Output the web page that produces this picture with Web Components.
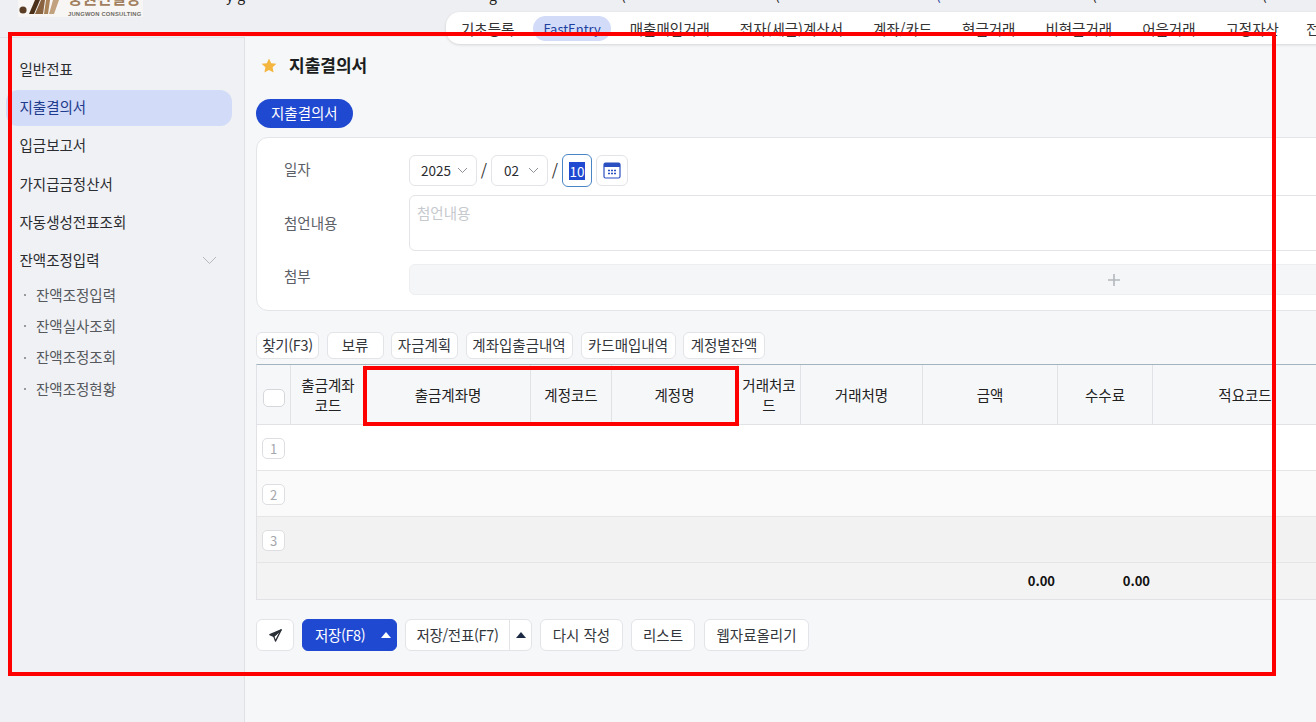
<!DOCTYPE html>
<html lang="ko">
<head>
<meta charset="utf-8">
<title>지출결의서</title>
<style>
    html, body { margin: 0; height: 100%; }
    body {
        width: 1316px;
        height: 722px;
        overflow: hidden;
        position: relative;
        display: flex;
        flex-direction: column;
        background: #f6f7f9;
        color: #222;
        font: 14.5px/1.4 "Noto Sans CJK KR", "Noto Sans", sans-serif;
    }
    .body-row { display: flex; flex: 1; min-height: 0; }
</style>
</head>
<body>
<top-header></top-header>
<div class="body-row">
    <side-nav></side-nav>
    <voucher-page></voucher-page>
</div>
<red-mark style="left:8px;top:32px;width:1260px;height:636px"></red-mark>
<red-mark style="left:363px;top:366px;width:368px;height:52px"></red-mark>

<script>
class TopHeader extends HTMLElement {
    constructor() {
        super();
        this.attachShadow({ mode: 'open' });
    }

    connectedCallback() {
        const tabs = ['기초등록', 'FastEntry', '매출매입거래', '전자(세금)계산서', '계좌/카드', '현금거래', '비현금거래', '어음거래', '고정자산', '전표'];
        this.shadowRoot.innerHTML = `
        <style>
            :host { display: block; height: 37px; flex: none; position: relative; background: #eeeff2; }
            .logo { position: absolute; left: 18px; top: 0; width: 125px; height: 17px; background: #f7f6f4; overflow: hidden; }
            .logo svg { position: absolute; left: 0; top: 0; }
            .logo .ko { position: absolute; left: 50px; top: -12px; font-size: 15.7px; line-height: 20px; font-weight: 700; color: #a2805f; white-space: nowrap; }
            .logo .en { position: absolute; left: 50px; top: 10px; font: 700 5.8px/8px "Liberation Sans", sans-serif; color: #6d6a66; white-space: nowrap; letter-spacing: .2px; }
            .cut { position: absolute; top: -13px; font-size: 14px; line-height: 17px; color: #222; white-space: nowrap; }
            .tabs {
                position: absolute; left: 446px; top: 12px; width: 1000px; height: 32px; box-sizing: border-box;
                display: flex; align-items: center; gap: 10px; padding-left: 5px;
                background: #fff; border-radius: 14px 0 0 14px; box-shadow: 0 1px 3px rgba(0,0,0,.14); z-index: 2;
            }
            .tab { padding: 0 10px; line-height: 25px; height: 25px; white-space: nowrap; color: #333; border-radius: 13px; }
            .tab.on { background: #d2dbf8; color: #1d3f9e; margin: 0 -1px 0 -1px; font-size: 13px; }
            .tab:last-child { margin-left: -3px; }
        </style>
        <div class="logo">
            <svg width="48" height="17" viewBox="0 0 48 17">
                <circle cx="5" cy="10" r="3.6" fill="#5a3d24"/>
                <path d="M11 14 L17 0 L22 0 L16 14 Z" fill="#4a3019"/>
                <path d="M17 14 L23 0 L27 0 L25 14 Z" fill="#8a6340"/>
                <path d="M26 14 L28 0 L32 0 L30 14 Z" fill="#a98258"/>
                <path d="M31 14 L35 0 L41 0 L36 14 Z" fill="#c2a27e"/>
            </svg>
            <span class="ko">중원컨설팅</span>
            <span class="en">JUNGWON CONSULTING</span>
        </div>
        <span class="cut" style="left:226px">y g</span>
        <span class="cut" style="left:489px">g</span>
        <span class="cut" style="left:621px">(</span>
        <span class="cut" style="left:775px">(</span>
        <span class="cut" style="left:936px;color:#1d3f9e">(</span>
        <span class="cut" style="left:1092px">(</span>
        <span class="cut" style="left:1262px">(</span>
        <nav class="tabs">
            ${tabs.map((t, i) => `<span class="tab ${i == 1 ? 'on' : ''}">${t}</span>`).join('')}
        </nav>
        `;
    }
}

class SideNav extends HTMLElement {
    constructor() {
        super();
        this.attachShadow({ mode: 'open' });
    }

    connectedCallback() {
        const main = ['일반전표', '지출결의서', '입금보고서', '가지급금정산서', '자동생성전표조회'];
        const sub = ['잔액조정입력', '잔액실사조회', '잔액조정조회', '잔액조정현황'];
        this.shadowRoot.innerHTML = `
        <style>
            :host { display: block; width: 245px; flex: none; box-sizing: border-box; background: #f0f1f4; border-right: 1px solid #dfe1e5; border-top: 1px solid #e2e3e7; padding-top: 14px; }
            ul { list-style: none; margin: 0; padding: 0; }
            .item { height: 36px; box-sizing: border-box; padding: 0 0 2px 13.5px; margin: 0 12px 2.25px 6px; display: flex; align-items: center; justify-content: space-between; border-radius: 12px; color: #2a2c30; white-space: nowrap; }
            .item.on { background: #d2dbf8; color: #1d3a8c; }
            .item svg { margin-right: 15px; }
            .subs { margin-top: -1.5px; }
            .sub { height: 31.4px; padding: 0 0 2px 36px; box-sizing: border-box; position: relative; display: flex; align-items: center; color: #55585d; }
            .sub::before { content: ""; position: absolute; left: 24px; top: 14px; width: 2px; height: 2px; background: #999; }
        </style>
        <ul>
            ${main.map((t, i) => `<li class="item ${i == 1 ? 'on' : ''}">${t}</li>`).join('')}
            <li class="item">잔액조정입력
                <svg width="15" height="9" viewBox="0 0 15 9" fill="none" stroke="#b5b8bd"><path d="M1 1 L7.5 7.5 L14 1"/></svg>
            </li>
        </ul>
        <ul class="subs">
            ${sub.map(t => `<li class="sub">${t}</li>`).join('')}
        </ul>
        `;
    }
}

class ToolBtn extends HTMLElement {
    constructor() {
        super();
        this.attachShadow({ mode: 'open' });
    }

    connectedCallback() {
        this.shadowRoot.innerHTML = `
        <style>
            :host { display: inline-flex; align-items: center; justify-content: center; box-sizing: border-box; height: var(--btn-h, 27px); background: #fff; border: 1px solid #e2e4e8; border-radius: 6px; white-space: nowrap; color: #33363b; }
        </style>
        <slot></slot>
        `;
    }
}

class DataTable extends HTMLElement {
    constructor() {
        super();
        this.attachShadow({ mode: 'open' });
    }

    connectedCallback() {
        const cols = [
            ['출금계좌<br>코드', 75], ['출금계좌명', 165], ['계정코드', 81], ['계정명', 126], ['거래처코드', 63],
            ['거래처명', 122], ['금액', 135], ['수수료', 95], ['적요코드', 185]
        ];
        const tpl = '34px ' + cols.map(c => c[1] + 'px').join(' ') + ' 1fr';
        this.shadowRoot.innerHTML = `
        <style>
            :host { display: block; width: 1590px; box-sizing: border-box; border: 1px solid #e0e2e5; border-top: 1px solid #a3b4bf; }
            .head { display: grid; grid-template-columns: ${tpl}; height: 59px; border-bottom: 1px solid #e0e2e5; }
            .th { display: flex; align-items: center; justify-content: center; text-align: center; border-right: 1px solid #e0e2e5; padding: 0 3px; line-height: 20px; color: #222; }
            .th:last-child { border-right: 0; }
            .check { width: 22px; height: 18px; margin-top: 6px; border: 1px solid #d5d7db; border-radius: 5px; background: #fff; box-sizing: border-box; }
            .row { height: 46px; box-sizing: border-box; border-bottom: 1px solid #e4e5e7; padding: 1px 0 0 5px; display: flex; align-items: center; background: #fff; }
            .row.r2 { background: #fafafa; }
            .row.r3 { background: #f2f2f2; }
            .num { width: 23px; height: 21px; box-sizing: border-box; border: 1px solid #dcdee1; border-radius: 5px; background: #fff; color: #a5a8ac; font-size: 13px; line-height: 19px; text-align: center; }
            .foot { display: grid; grid-template-columns: ${tpl}; height: 36px; background: #f3f3f3; align-items: center; font-weight: 700; font-size: 13px; color: #111; }
            .foot span { text-align: right; padding-right: 3px; }
        </style>
        <div class="head">
            <div class="th"><div class="check"></div></div>
            ${cols.map(c => `<div class="th"><span>${c[0]}</span></div>`).join('')}
            <div class="th"></div>
        </div>
        <div class="row"><div class="num">1</div></div>
        <div class="row r2"><div class="num">2</div></div>
        <div class="row r3"><div class="num">3</div></div>
        <div class="foot">
            <i></i><i></i><i></i><i></i><i></i><i></i><i></i>
            <span>0.00</span><span>0.00</span>
        </div>
        `;
    }
}

class VoucherPage extends HTMLElement {
    constructor() {
        super();
        this.attachShadow({ mode: 'open' });
    }

    connectedCallback() {
        const chevron = `<svg width="11" height="7" viewBox="0 0 11 7" fill="none" stroke="#8d9298"><path d="M1 1 L5.5 5.5 L10 1"/></svg>`;
        const caret = (c) => `<svg width="10" height="6" viewBox="0 0 10 6"><path d="M5 0 L10 6 L0 6 Z" fill="${c}"/></svg>`;
        this.shadowRoot.innerHTML = `
        <style>
            :host { display: block; flex: 1; min-width: 0; box-sizing: border-box; padding: 18px 0 0 11px; overflow: hidden; }
            .title { display: flex; align-items: center; gap: 12px; height: 20px; padding-bottom: 2px; margin-left: 5px; font-size: 17px; font-weight: 700; color: #1b1d20; }
            .pill { display: inline-block; margin-top: 22px; height: 29px; line-height: 28px; padding: 0 15px; background: #1f49d1; color: #fff; border-radius: 15px; }
            .card { width: 1590px; height: 174px; box-sizing: border-box; margin-top: 9px; padding: 16px 27px 0 27px; background: #fff; border: 1px solid #e3e5e8; border-radius: 12px; }
            .field { display: flex; }
            .field label { width: 125px; flex: none; color: #5c6066; align-self: center; position: relative; top: -1px; }
            .date { height: 33px; align-items: center; }
            .sel { height: 31px; box-sizing: border-box; background: #fff; border: 1px solid #e2e4e8; border-radius: 6px; display: flex; align-items: center; justify-content: space-between; padding: 0 8px 0 11px; color: #2a2c30; font-size: 13.5px; }
            .slash { width: 14px; text-align: center; color: #333; font-size: 16px; }
            .day { width: 30px; height: 33px; box-sizing: border-box; border: 1px solid #4a86c5; border-radius: 6px; display: flex; align-items: center; justify-content: center; }
            .day span { background: #1f49d1; color: #fff; font-size: 13.5px; line-height: 18px; padding: 0 .5px; }
            .cal { width: 32px; height: 31px; margin-left: 4px; box-sizing: border-box; border: 1px solid #e2e4e8; border-radius: 6px; display: flex; align-items: center; justify-content: center; }
            .note { margin-top: 8px; height: 56px; }
            .note label { top: 0; }
            .note div { flex: 1; box-sizing: border-box; border: 1px solid #e2e4e8; border-radius: 6px; padding: 7px; line-height: 20px; color: #c6c9cd; }
            .file { margin-top: 13px; height: 31px; }
            .file label { top: -3px; }
            .file div { flex: 1; background: #f5f6f7; border: 1px solid #eceef0; border-radius: 6px; box-sizing: border-box; display: flex; align-items: center; justify-content: center; }
            .tools { display: flex; gap: 7.5px; margin-top: 21px; }
            data-table { margin-top: 5px; }
            .actions { display: flex; gap: 8px; margin-top: 19px; --btn-h: 32px; }
            .split { display: flex; height: 32px; box-sizing: border-box; background: #fff; border: 1px solid #e2e4e8; border-radius: 6px; white-space: nowrap; }
            .split span { display: flex; align-items: center; justify-content: center; }
            .save { background: #1f49d1; border-color: #1f49d1; color: #fff; width: 95px; padding-left: 12px; align-items: center; justify-content: space-between; }
            .save em { font-style: normal; letter-spacing: -.4px; }
            .tight { letter-spacing: -.3px; }
        </style>
        <div class="title">
            <svg width="16" height="15" viewBox="0 0 16 15"><path d="M8 0.5 L10.2 5.2 L15.4 5.8 L11.6 9.3 L12.6 14.4 L8 11.9 L3.4 14.4 L4.4 9.3 L0.6 5.8 L5.8 5.2 Z" fill="#f4b63f"/></svg>
            지출결의서
        </div>
        <div class="pill">지출결의서</div>
        <section class="card">
            <div class="field date">
                <label>일자</label>
                <div class="sel" style="width:68px">2025 ${chevron}</div>
                <div class="slash">/</div>
                <div class="sel" style="width:57px;padding-left:12px">02 ${chevron}</div>
                <div class="slash">/</div>
                <div class="day"><span>10</span></div>
                <div class="cal">
                    <svg width="18" height="17" viewBox="0 0 18 17" fill="none">
                        <rect x="1" y="1" width="16" height="15" rx="1.5" fill="#fff" stroke="#2a4fc0" stroke-width="1.2"/>
                        <path d="M1 2.5 a1.5 1.5 0 0 1 1.5-1.5 h13 a1.5 1.5 0 0 1 1.5 1.5 V5 H1 Z" fill="#2a4fc0"/>
                        <path d="M5 8.5h2M8 8.5h2M11 8.5h2M5 11.5h2M8 11.5h2M11 11.5h2" stroke="#2a4fc0" stroke-width="1.6"/>
                    </svg>
                </div>
            </div>
            <div class="field note"><label>첨언내용</label><div>첨언내용</div></div>
            <div class="field file">
                <label>첨부</label>
                <div><svg width="12" height="12" viewBox="0 0 12 12" stroke="#b3b7bd" stroke-width="1.6"><path d="M6 0 V12 M0 6 H12"/></svg></div>
            </div>
        </section>
        <div class="tools">
            <tool-btn style="width:63px" class="tight">찾기(F3)</tool-btn>
            <tool-btn style="width:57px">보류</tool-btn>
            <tool-btn style="width:67px">자금계획</tool-btn>
            <tool-btn style="width:107px">계좌입출금내역</tool-btn>
            <tool-btn style="width:95px;margin-left:.5px">카드매입내역</tool-btn>
            <tool-btn style="width:82px">계정별잔액</tool-btn>
        </div>
        <data-table></data-table>
        <div class="actions">
            <tool-btn style="width:38px">
                <svg width="13" height="13" viewBox="0 0 15 15" stroke="#2b2f36" stroke-width="1.5" stroke-linejoin="round"><path d="M14 1 L1 6.5 L5.5 8.5 Z" fill="#2b2f36"/><path d="M14 1 L5.5 8.5 L7.5 14 Z" fill="none"/></svg>
            </tool-btn>
            <div class="split save"><em>저장(F8)</em><span style="width:21px">${caret('#fff')}</span></div>
            <div class="split" style="width:127px">
                <span class="tight" style="flex:1;color:#33363b">저장/전표(F7)</span>
                <span style="width:21px;border-left:1px solid #e2e4e8">${caret('#1c2a44')}</span>
            </div>
            <tool-btn style="width:83px">다시 작성</tool-btn>
            <tool-btn style="width:64px">리스트</tool-btn>
            <tool-btn style="width:105px;margin-left:1px">웹자료올리기</tool-btn>
        </div>
        `;
    }
}

class RedMark extends HTMLElement {
    constructor() {
        super();
        this.attachShadow({ mode: 'open' });
    }

    connectedCallback() {
        this.shadowRoot.innerHTML = `
        <style>
            :host { display: block; position: absolute; border: 4.5px solid #f00; z-index: 5; pointer-events: none; }
        </style>
        `;
    }
}

customElements.define('top-header', TopHeader);
customElements.define('side-nav', SideNav);
customElements.define('tool-btn', ToolBtn);
customElements.define('data-table', DataTable);
customElements.define('voucher-page', VoucherPage);
customElements.define('red-mark', RedMark);
</script>
</body>
</html>
